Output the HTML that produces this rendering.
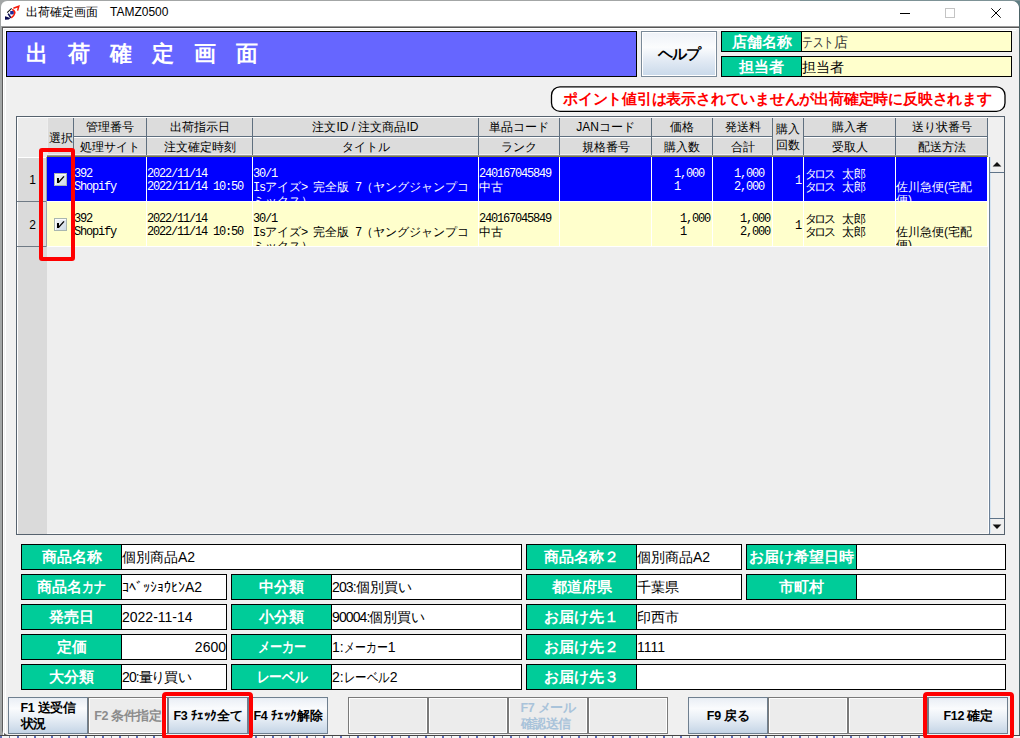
<!DOCTYPE html><html lang="ja"><head><meta charset="utf-8"><style>
*{box-sizing:border-box;margin:0;padding:0}
html,body{width:1020px;height:738px;overflow:hidden;background:#a3a6a6;font-family:"Liberation Sans",sans-serif}
.a{position:absolute}
.ttxt{position:absolute;top:5px;font-size:12px;color:#000;white-space:nowrap;line-height:14px}
.hch{position:absolute;font-size:22px;font-weight:bold;color:#fff;line-height:26px}
.btn{position:absolute;border:1px solid #7a8a99;background:linear-gradient(#eef2f8 0%,#fbfcfd 35%,#e2eaf4 65%,#c9d9ea 100%);font-weight:bold;color:#000;text-align:center}
.lbl{position:absolute;background:#00cc99;border:1px solid #000;color:#fff;font-weight:bold;text-align:center;white-space:nowrap}
.val{position:absolute;background:#fff;border:1px solid #000;color:#000;white-space:nowrap;overflow:hidden}
.hl{position:absolute;background:#5f6f7f}
.wl{position:absolute;background:#fff}
.ht{position:absolute;font-size:12px;color:#000;text-align:center;line-height:14px;white-space:nowrap}
.dc{position:absolute;font-family:"Liberation Mono",monospace;font-size:12px;letter-spacing:-1.2px;line-height:13px;white-space:pre;overflow:hidden}
.dp{position:absolute;font-family:"Liberation Sans",sans-serif;font-size:12px;line-height:13px;white-space:pre;overflow:hidden}
.j{font-family:"Liberation Sans",sans-serif;letter-spacing:0}
.red{position:absolute;border:4px solid #f00;border-radius:3px}
.fk{position:absolute;top:697px;width:80px;height:37px;font-size:12.5px;letter-spacing:-0.35px;font-weight:bold;line-height:16px;display:flex;align-items:center;justify-content:center;text-align:left;white-space:nowrap}
.en{border:1px solid #6f7f8f;background:linear-gradient(#e9eef5 0%,#fafbfd 30%,#e6edf5 60%,#c5d5e6 100%);color:#000}
.dis{background:#ececec;border:1px solid #7a7a7a;box-shadow:inset 1px 1px 0 #fff,inset -1px -1px 0 #fff;color:#8c8c8c}
</style></head><body>
<div class="a" style="left:1012px;top:0;width:8px;height:738px;background:#5f7f84"></div>
<div class="a" style="left:800px;top:0;width:220px;height:1px;background:#7d9296"></div>
<div class="a" style="left:2px;top:1px;width:1018px;height:735px;background:#f0f0f0;border:1px solid #5b5b5b;border-right-color:#4c6367;border-top:none;border-radius:8px 8px 0 6px"></div>
<div class="a" style="left:1px;top:1px;width:1018px;height:25px;background:#fff;border-radius:6px 7px 0 0"></div>
<div class="a" style="left:2px;top:26px;width:1017px;height:1px;background:#9c9c9c"></div>
<div class="a" style="left:2px;top:27px;width:1017px;height:1px;background:#555"></div>
<div class="wl" style="left:3px;top:28px;width:1015px;height:1px"></div>
<div class="wl" style="left:3px;top:28px;width:1px;height:707px"></div>
<div class="wl" style="left:5px;top:30px;width:1011px;height:1px"></div>
<div class="wl" style="left:5px;top:30px;width:1px;height:703px"></div>
<svg class="a" style="left:0;top:0" width="22" height="22" viewBox="0 0 22 22">
<path d="M5 16.2 L5 19.8 L8.8 19.6 L10.3 18.2 L7.6 17 Z" fill="#0a0a50"/>
<path d="M8.2 13.6 L10.8 17.8" stroke="#0a0a50" stroke-width="1.6"/>
<path d="M7.2 12.6 L11.6 8.3" stroke="#111" stroke-width="1.1"/>
<rect x="10.2" y="11" width="3.6" height="3.4" fill="#1a2a9a"/>
<path d="M12.2 9.3 Q18 12.5 11.2 17.8" stroke="#f51a0a" stroke-width="1.5" fill="none"/>
<path d="M13.4 8.2 L18.8 6.3 L17.6 10.6" stroke="#f51a0a" stroke-width="1.5" fill="none"/>
</svg>
<div class="ttxt" style="left:26px">出荷確定画面</div>
<div class="ttxt" style="left:110px">TAMZ0500</div>
<div class="a" style="left:900px;top:13px;width:10px;height:1px;background:#000"></div>
<div class="a" style="left:945px;top:8px;width:10px;height:10px;border:1px solid #c4c4c4"></div>
<svg class="a" style="left:991px;top:8px" width="10" height="10" viewBox="0 0 10 10"><path d="M0.3 0.3 L9.7 9.7 M9.7 0.3 L0.3 9.7" stroke="#000" stroke-width="1"/></svg>
<div class="a" style="left:6px;top:31px;width:631px;height:46px;background:#6666ff;border:1px solid #000"></div>
<div class="hch" style="left:26px;top:41px">出</div>
<div class="hch" style="left:68px;top:41px">荷</div>
<div class="hch" style="left:110px;top:41px">確</div>
<div class="hch" style="left:152px;top:41px">定</div>
<div class="hch" style="left:194px;top:41px">画</div>
<div class="hch" style="left:236px;top:41px">面</div>
<div class="btn" style="left:641px;top:31px;width:76px;height:46px;font-size:15px;letter-spacing:-1.3px;line-height:44px;font-weight:bold;box-shadow:inset 0 0 0 1px #fff">ヘルプ</div>
<div class="lbl" style="left:721px;top:31px;width:81px;height:21px;font-size:15px;line-height:19px">店舗名称</div>
<div class="val" style="left:801px;top:31px;width:211px;height:21px;background:#ffffcc;font-size:14px;line-height:20px;color:#333"><span style="display:inline-block;transform:scaleX(0.76);transform-origin:0 50%;margin-right:-10px">テスト</span>店</div>
<div class="lbl" style="left:721px;top:56px;width:81px;height:21px;font-size:15px;line-height:19px">担当者</div>
<div class="val" style="left:801px;top:56px;width:211px;height:21px;background:#ffffcc;font-size:14px;line-height:20px">担当者</div>
<svg class="a" style="left:550px;top:85px" width="458" height="29" viewBox="0 0 458 29"><rect x="1.5" y="1.8" width="453.5" height="24.6" rx="8.5" ry="8.5" fill="#fff" stroke="#000" stroke-width="1.3"/></svg>
<div class="a" style="left:563px;top:88px;color:#f00;font-weight:bold;font-size:15px;letter-spacing:-0.22px;line-height:22px;white-space:nowrap">ポイント値引は表示されていませんが出荷確定時に反映されます</div>
<div class="a" style="left:16px;top:116px;width:989px;height:419px;background:#eeeeee;border:1px solid #56626e"></div>
<div class="wl" style="left:17px;top:117px;width:987px;height:1px"></div>
<div class="wl" style="left:17px;top:117px;width:1px;height:417px"></div>
<div class="wl" style="left:17px;top:533px;width:987px;height:1px;background:#f8f8f8"></div>
<div class="a" style="left:18px;top:118px;width:29px;height:39px;background:#ebebeb"></div>
<div class="a" style="left:18px;top:157px;width:29px;height:377px;background:#dadada"></div>
<div class="wl" style="left:18px;top:157px;width:29px;height:1px"></div>
<div class="a" style="left:48px;top:118px;width:939px;height:36px;background:#dcdcdc"></div>
<div class="wl" style="left:48px;top:154px;width:939px;height:1px;background:#f2eef2"></div>
<div class="a" style="left:47px;top:155px;width:941px;height:1px;background:#989898"></div>
<div class="a" style="left:47px;top:156px;width:941px;height:1px;background:#808040"></div>
<div class="hl" style="left:74px;top:136px;width:698px;height:1px"></div>
<div class="wl" style="left:74px;top:137px;width:698px;height:1px"></div>
<div class="hl" style="left:804px;top:136px;width:183px;height:1px"></div>
<div class="wl" style="left:804px;top:137px;width:183px;height:1px"></div>
<div class="hl" style="left:73px;top:118px;width:1px;height:37px"></div>
<div class="hl" style="left:146px;top:118px;width:1px;height:37px"></div>
<div class="hl" style="left:252px;top:118px;width:1px;height:37px"></div>
<div class="hl" style="left:478px;top:118px;width:1px;height:37px"></div>
<div class="hl" style="left:559px;top:118px;width:1px;height:37px"></div>
<div class="hl" style="left:651px;top:118px;width:1px;height:37px"></div>
<div class="hl" style="left:712px;top:118px;width:1px;height:37px"></div>
<div class="hl" style="left:772px;top:118px;width:1px;height:37px"></div>
<div class="hl" style="left:803px;top:118px;width:1px;height:37px"></div>
<div class="hl" style="left:895px;top:118px;width:1px;height:37px"></div>
<div class="hl" style="left:987px;top:118px;width:1px;height:37px"></div>
<div class="ht" style="left:74px;top:120px;width:72px">管理番号</div>
<div class="ht" style="left:147px;top:120px;width:105px">出荷指示日</div>
<div class="ht" style="left:253px;top:120px;width:225px">注文ID / 注文商品ID</div>
<div class="ht" style="left:479px;top:120px;width:80px">単品コード</div>
<div class="ht" style="left:560px;top:120px;width:91px">JANコード</div>
<div class="ht" style="left:652px;top:120px;width:60px">価格</div>
<div class="ht" style="left:713px;top:120px;width:59px">発送料</div>
<div class="ht" style="left:804px;top:120px;width:91px">購入者</div>
<div class="ht" style="left:896px;top:120px;width:91px">送り状番号</div>
<div class="ht" style="left:74px;top:140px;width:72px">処理サイト</div>
<div class="ht" style="left:147px;top:140px;width:105px">注文確定時刻</div>
<div class="ht" style="left:253px;top:140px;width:225px">タイトル</div>
<div class="ht" style="left:479px;top:140px;width:80px">ランク</div>
<div class="ht" style="left:560px;top:140px;width:91px">規格番号</div>
<div class="ht" style="left:652px;top:140px;width:60px">購入数</div>
<div class="ht" style="left:713px;top:140px;width:59px">合計</div>
<div class="ht" style="left:804px;top:140px;width:91px">受取人</div>
<div class="ht" style="left:896px;top:140px;width:91px">配送方法</div>
<div class="ht" style="left:48px;top:131px;width:25px">選択</div>
<div class="ht" style="left:773px;top:121px;width:30px;line-height:16px">購入<br>回数</div>
<div class="a" style="left:47px;top:157px;width:940px;height:44px;background:#0000ff"></div>
<div class="wl" style="left:47px;top:201px;width:940px;height:1px"></div>
<div class="wl" style="left:146px;top:157px;width:1px;height:45px"></div>
<div class="wl" style="left:252px;top:157px;width:1px;height:45px"></div>
<div class="wl" style="left:478px;top:157px;width:1px;height:45px"></div>
<div class="wl" style="left:559px;top:157px;width:1px;height:45px"></div>
<div class="wl" style="left:651px;top:157px;width:1px;height:45px"></div>
<div class="wl" style="left:712px;top:157px;width:1px;height:45px"></div>
<div class="wl" style="left:772px;top:157px;width:1px;height:45px"></div>
<div class="wl" style="left:803px;top:157px;width:1px;height:45px"></div>
<div class="wl" style="left:895px;top:157px;width:1px;height:45px"></div>
<div class="wl" style="left:987px;top:157px;width:1px;height:45px"></div>
<div class="a" style="left:17px;top:201px;width:30px;height:1px;background:#6f7a85"></div>
<div class="a" style="left:46px;top:157px;width:1px;height:45px;background:#9aa4ae"></div>
<div class="a" style="left:17px;top:173px;width:19px;text-align:right;font-size:12px;line-height:14px;color:#000">1</div>
<div class="a" style="left:54px;top:173px;width:13px;height:13px;border:1px solid #a9b6b0;background:linear-gradient(135deg,#f4f6f8 10%,#d2dde8 90%)"></div>
<div class="a" style="left:55px;top:174px;width:11px;height:11px;border:1px solid #fcfcfc;border-right:none;border-bottom:none"></div>
<svg class="a" style="left:54px;top:173px" width="13" height="13" viewBox="0 0 13 13"><rect x="3" y="5" width="2" height="5" fill="#000"/><path d="M4.6 9.4 L10 3.4" stroke="#000" stroke-width="1.4" fill="none"/></svg>
<div class="dc" style="left:74px;top:168px;width:72px;height:33px;color:#fff">392
Shopify</div>
<div class="dc" style="left:147px;top:168px;width:105px;height:33px;color:#fff">2022/11/14
2022/11/14 10:50</div>
<div class="dc" style="left:253px;top:168px;width:225px;height:33px;color:#fff">30/1
Is<span class="j">アイズ</span>&gt; <span class="j">完全版</span> 7<span class="j">（ヤングジャンプコ</span>
<span class="j">ミックス）</span></div>
<div class="dc" style="left:479px;top:168px;width:80px;height:33px;color:#fff">240167045849
<span class="j">中古</span></div>
<div class="dc" style="left:674px;top:168px;width:38px;height:33px;color:#fff">1,000
1</div>
<div class="dc" style="left:734px;top:168px;width:38px;height:33px;color:#fff">1,000
2,000</div>
<div class="dc" style="left:795px;top:175px;width:8px;height:26px;color:#fff">1</div>
<div class="dp" style="left:805px;top:168px;width:37px;height:33px;color:#fff"><span style="letter-spacing:-2.6px">タロス</span>
<span style="letter-spacing:-2.6px">タロス</span></div>
<div class="dp" style="left:842px;top:168px;width:40px;height:33px;color:#fff">太郎
太郎</div>
<div class="dp" style="left:896px;top:181px;width:91px;height:20px;color:#fff">佐川急便(宅配
便)</div>
<div class="a" style="left:47px;top:202px;width:940px;height:44px;background:#ffffcc"></div>
<div class="wl" style="left:47px;top:246px;width:940px;height:1px"></div>
<div class="wl" style="left:146px;top:202px;width:1px;height:45px"></div>
<div class="wl" style="left:252px;top:202px;width:1px;height:45px"></div>
<div class="wl" style="left:478px;top:202px;width:1px;height:45px"></div>
<div class="wl" style="left:559px;top:202px;width:1px;height:45px"></div>
<div class="wl" style="left:651px;top:202px;width:1px;height:45px"></div>
<div class="wl" style="left:712px;top:202px;width:1px;height:45px"></div>
<div class="wl" style="left:772px;top:202px;width:1px;height:45px"></div>
<div class="wl" style="left:803px;top:202px;width:1px;height:45px"></div>
<div class="wl" style="left:895px;top:202px;width:1px;height:45px"></div>
<div class="wl" style="left:987px;top:202px;width:1px;height:45px"></div>
<div class="a" style="left:17px;top:246px;width:30px;height:1px;background:#6f7a85"></div>
<div class="a" style="left:46px;top:202px;width:1px;height:45px;background:#9aa4ae"></div>
<div class="a" style="left:17px;top:218px;width:19px;text-align:right;font-size:12px;line-height:14px;color:#000">2</div>
<div class="a" style="left:54px;top:218px;width:13px;height:13px;border:1px solid #a9b6b0;background:linear-gradient(135deg,#f4f6f8 10%,#d2dde8 90%)"></div>
<div class="a" style="left:55px;top:219px;width:11px;height:11px;border:1px solid #fcfcfc;border-right:none;border-bottom:none"></div>
<svg class="a" style="left:54px;top:218px" width="13" height="13" viewBox="0 0 13 13"><rect x="3" y="5" width="2" height="5" fill="#000"/><path d="M4.6 9.4 L10 3.4" stroke="#000" stroke-width="1.4" fill="none"/></svg>
<div class="dc" style="left:74px;top:213px;width:72px;height:33px;color:#000">392
Shopify</div>
<div class="dc" style="left:147px;top:213px;width:105px;height:33px;color:#000">2022/11/14
2022/11/14 10:50</div>
<div class="dc" style="left:253px;top:213px;width:225px;height:33px;color:#000">30/1
Is<span class="j">アイズ</span>&gt; <span class="j">完全版</span> 7<span class="j">（ヤングジャンプコ</span>
<span class="j">ミックス）</span></div>
<div class="dc" style="left:479px;top:213px;width:80px;height:33px;color:#000">240167045849
<span class="j">中古</span></div>
<div class="dc" style="left:680px;top:213px;width:32px;height:33px;color:#000">1,000
1</div>
<div class="dc" style="left:740px;top:213px;width:32px;height:33px;color:#000">1,000
2,000</div>
<div class="dc" style="left:795px;top:220px;width:8px;height:26px;color:#000">1</div>
<div class="dp" style="left:805px;top:213px;width:37px;height:33px;color:#000"><span style="letter-spacing:-2.6px">タロス</span>
<span style="letter-spacing:-2.6px">タロス</span></div>
<div class="dp" style="left:842px;top:213px;width:40px;height:33px;color:#000">太郎
太郎</div>
<div class="dp" style="left:896px;top:226px;width:91px;height:20px;color:#000">佐川急便(宅配
便)</div>
<div class="a" style="left:988px;top:117px;width:16px;height:417px;background:#f0f0f0"></div>
<div class="wl" style="left:988px;top:157px;width:1px;height:376px"></div>
<div class="a" style="left:989px;top:157px;width:1px;height:377px;background:#6d8197"></div>
<div class="a" style="left:990px;top:157px;width:1px;height:376px;background:#d4e4f2"></div>
<div class="a" style="left:990px;top:172px;width:14px;height:1px;background:#5f7489"></div>
<svg class="a" style="left:990px;top:157px" width="14" height="15" viewBox="0 0 14 15"><path d="M2.6 9.4 L7 5 L11.4 9.4 Z" fill="#111"/></svg>
<div class="a" style="left:990px;top:518px;width:14px;height:1px;background:#5f7489"></div>
<svg class="a" style="left:990px;top:519px" width="14" height="15" viewBox="0 0 14 15"><path d="M2.6 5.6 L7 10 L11.4 5.6 Z" fill="#111"/></svg>
<div class="red" style="left:39px;top:148px;width:36px;height:113px"></div>
<div class="lbl" style="left:21px;top:544px;width:101px;height:26px;font-size:15px;line-height:24px">商品名称</div>
<div class="val" style="left:121px;top:544px;width:401px;height:26px;font-size:14px;line-height:24px;">個別商品A2</div>
<div class="lbl" style="left:526px;top:544px;width:111px;height:26px;font-size:15px;line-height:24px">商品名称２</div>
<div class="val" style="left:636px;top:544px;width:106px;height:26px;font-size:14px;line-height:24px;">個別商品A2</div>
<div class="lbl" style="left:746px;top:544px;width:111px;height:26px;font-size:15px;line-height:24px">お届け希望日時</div>
<div class="val" style="left:856px;top:544px;width:150px;height:26px;font-size:14px;line-height:24px;"></div>
<div class="lbl" style="left:21px;top:574px;width:101px;height:26px;font-size:15px;line-height:24px">商品名<span style="display:inline-block;transform:scaleX(0.8);transform-origin:0 50%;margin-right:-6px">カナ</span></div>
<div class="val" style="left:121px;top:574px;width:106px;height:26px;font-size:14px;line-height:24px;">ｺﾍﾞｯｼｮｳﾋﾝA2</div>
<div class="lbl" style="left:231px;top:574px;width:101px;height:26px;font-size:15px;line-height:24px">中分類</div>
<div class="val" style="left:331px;top:574px;width:191px;height:26px;font-size:14px;line-height:24px;"><span style="letter-spacing:-0.9px">203:</span>個別買い</div>
<div class="lbl" style="left:526px;top:574px;width:111px;height:26px;font-size:15px;line-height:24px">都道府県</div>
<div class="val" style="left:636px;top:574px;width:106px;height:26px;font-size:14px;line-height:24px;">千葉県</div>
<div class="lbl" style="left:746px;top:574px;width:111px;height:26px;font-size:15px;line-height:24px">市町村</div>
<div class="val" style="left:856px;top:574px;width:150px;height:26px;font-size:14px;line-height:24px;"></div>
<div class="lbl" style="left:21px;top:604px;width:101px;height:26px;font-size:15px;line-height:24px">発売日</div>
<div class="val" style="left:121px;top:604px;width:106px;height:26px;font-size:14px;line-height:24px;">2022-11-14</div>
<div class="lbl" style="left:231px;top:604px;width:101px;height:26px;font-size:15px;line-height:24px">小分類</div>
<div class="val" style="left:331px;top:604px;width:191px;height:26px;font-size:14px;line-height:24px;"><span style="letter-spacing:-0.9px">90004:</span>個別買い</div>
<div class="lbl" style="left:526px;top:604px;width:111px;height:26px;font-size:15px;line-height:24px">お届け先１</div>
<div class="val" style="left:636px;top:604px;width:370px;height:26px;font-size:14px;line-height:24px;">印西市</div>
<div class="lbl" style="left:21px;top:634px;width:101px;height:26px;font-size:15px;line-height:24px">定価</div>
<div class="val" style="left:121px;top:634px;width:106px;height:26px;font-size:14px;line-height:24px;text-align:right;padding-right:0;">2600</div>
<div class="lbl" style="left:231px;top:634px;width:101px;height:26px;font-size:15px;line-height:24px"><span style="display:inline-block;transform:scaleX(0.81)">メーカー</span></div>
<div class="val" style="left:331px;top:634px;width:191px;height:26px;font-size:14px;line-height:24px;">1:<span style="display:inline-block;transform:scaleX(0.78);transform-origin:0 50%;margin-right:-12px">メーカー</span>1</div>
<div class="lbl" style="left:526px;top:634px;width:111px;height:26px;font-size:15px;line-height:24px">お届け先２</div>
<div class="val" style="left:636px;top:634px;width:370px;height:26px;font-size:14px;line-height:24px;">1111</div>
<div class="lbl" style="left:21px;top:664px;width:101px;height:26px;font-size:15px;line-height:24px">大分類</div>
<div class="val" style="left:121px;top:664px;width:106px;height:26px;font-size:14px;line-height:24px;"><span style="letter-spacing:-0.9px">20:</span><span style="letter-spacing:-1.5px">量り</span>買い</div>
<div class="lbl" style="left:231px;top:664px;width:101px;height:26px;font-size:15px;line-height:24px"><span style="display:inline-block;transform:scaleX(0.85)">レーベル</span></div>
<div class="val" style="left:331px;top:664px;width:191px;height:26px;font-size:14px;line-height:24px;">2:<span style="display:inline-block;transform:scaleX(0.82);transform-origin:0 50%;margin-right:-10px">レーベル</span>2</div>
<div class="lbl" style="left:526px;top:664px;width:111px;height:26px;font-size:15px;line-height:24px">お届け先３</div>
<div class="val" style="left:636px;top:664px;width:370px;height:26px;font-size:14px;line-height:24px;"></div>
<div class="a" style="left:0;top:735px;width:1020px;height:1px;background:#454545"></div>
<div class="a" style="left:0;top:736px;width:1020px;height:2px;background:repeating-linear-gradient(90deg,#6070b8 0 2px,#f6f6f6 2px 9px,#8088a0 9px 10px,#fafafa 10px 17px)"></div>
<div class="fk en" style="left:8px">F1 送受信<br>状況</div>
<div class="fk dis" style="left:88px">F2 条件指定</div>
<div class="fk en" style="left:168px">F3 ﾁｪｯｸ全て</div>
<div class="fk en" style="left:248px">F4 ﾁｪｯｸ解除</div>
<div class="fk dis" style="left:348px"></div>
<div class="fk dis" style="left:428px"></div>
<div class="fk dis" style="left:508px"><span style="color:#a9c3da">F7 メール<br>確認送信</span></div>
<div class="fk dis" style="left:588px"></div>
<div class="fk en" style="left:688px">F9 戻る</div>
<div class="fk dis" style="left:768px"></div>
<div class="fk dis" style="left:848px"></div>
<div class="fk en" style="left:928px">F12 確定</div>
<div class="red" style="left:162px;top:692px;width:91px;height:47px;border-radius:4px"></div>
<div class="red" style="left:923px;top:692px;width:91px;height:47px;border-radius:4px"></div>
</body></html>
